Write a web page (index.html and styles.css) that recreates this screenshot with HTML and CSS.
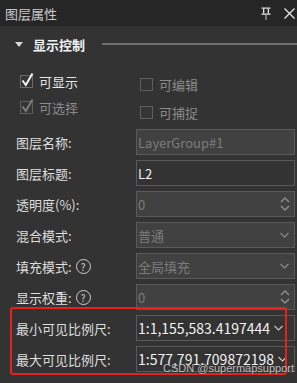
FILE: index.html
```html
<!DOCTYPE html>
<html lang="zh">
<head>
<meta charset="utf-8">
<link rel="stylesheet" href="styles.css">
</head>
<body>
<div class="panel">
  <div class="titlebar">
    <span class="title">图层属性</span>
    <div class="title-icons">
      <svg class="pin" width="10" height="14" viewBox="0 0 10 14">
        <rect x="0.5" y="0.5" width="9" height="1.2" fill="#e6e6e6"/>
        <rect x="2" y="1.5" width="1.3" height="5" fill="#e6e6e6"/>
        <rect x="6.7" y="1.5" width="1.3" height="5" fill="#e6e6e6"/>
        <rect x="0.5" y="6.5" width="9" height="1.3" fill="#e6e6e6"/>
        <rect x="4.2" y="7.5" width="1.6" height="5.5" fill="#8a8a8a"/>
      </svg>
      <svg class="close" width="11" height="11" viewBox="0 0 11 11">
        <path d="M0.5 0.5 L10.5 10.5 M10.5 0.5 L0.5 10.5" stroke="#e6e6e6" stroke-width="1.3" fill="none"/>
      </svg>
    </div>
  </div>

  <div class="section-head">
    <span class="tri"></span>
    <span class="section-title">显示控制</span>
    <span class="section-line"></span>
  </div>

  <div class="checks">
    <div class="check-col left">
      <div class="check-item">
        <span class="box"><svg width="15" height="16" viewBox="0 0 15 16"><path d="M2.5 8.5 L5.8 13 L12.5 1.5" stroke="#f2f2f2" stroke-width="2" fill="none"/></svg></span>
        <span class="check-label">可显示</span>
      </div>
      <div class="check-item dim">
        <span class="box"><svg width="15" height="16" viewBox="0 0 15 16"><path d="M2.5 8.5 L5.8 13 L12.5 1.5" stroke="#7e7e7e" stroke-width="2" fill="none"/></svg></span>
        <span class="check-label">可选择</span>
      </div>
    </div>
    <div class="check-col right">
      <div class="check-item dim">
        <span class="box"></span>
        <span class="check-label">可编辑</span>
      </div>
      <div class="check-item dim">
        <span class="box"></span>
        <span class="check-label">可捕捉</span>
      </div>
    </div>
  </div>

  <div class="form">
    <div class="row">
      <span class="label">图层名称:</span>
      <div class="field disabled"><span class="val">LayerGroup#1</span></div>
    </div>
    <div class="row">
      <span class="label">图层标题:</span>
      <div class="field"><span class="val">L2</span></div>
    </div>
    <div class="row">
      <span class="label">透明度(%):</span>
      <div class="field disabled"><span class="val">0</span>
        <svg class="spin" width="10" height="18" viewBox="0 0 10 18"><path d="M1 7 L5 3 L9 7 M1 11 L5 15 L9 11" stroke="#8c8c8c" stroke-width="1.5" fill="none"/></svg>
      </div>
    </div>
    <div class="row">
      <span class="label">混合模式:</span>
      <div class="field disabled"><span class="val">普通</span>
        <svg class="chev" width="9" height="6" viewBox="0 0 9 6"><path d="M0.5 1 L4.5 5 L8.5 1" stroke="#8c8c8c" stroke-width="1.1" fill="none"/></svg>
      </div>
    </div>
    <div class="row">
      <span class="label">填充模式:<span class="help">?</span></span>
      <div class="field disabled"><span class="val">全局填充</span>
        <svg class="chev" width="9" height="6" viewBox="0 0 9 6"><path d="M0.5 1 L4.5 5 L8.5 1" stroke="#8c8c8c" stroke-width="1.1" fill="none"/></svg>
      </div>
    </div>
    <div class="row">
      <span class="label">显示权重:<span class="help">?</span></span>
      <div class="field disabled"><span class="val">0</span>
        <svg class="spin" width="10" height="18" viewBox="0 0 10 18"><path d="M1 7 L5 3 L9 7 M1 11 L5 15 L9 11" stroke="#8c8c8c" stroke-width="1.5" fill="none"/></svg>
      </div>
    </div>
    <div class="row">
      <span class="label">最小可见比例尺:</span>
      <div class="field scale"><span class="val">1:1,155,583.4197444</span>
        <svg class="chev near" width="9" height="6" viewBox="0 0 9 6"><path d="M0.5 1 L4.5 5 L8.5 1" stroke="#c8c8c8" stroke-width="1.1" fill="none"/></svg>
      </div>
    </div>
    <div class="row">
      <span class="label">最大可见比例尺:</span>
      <div class="field scale"><span class="val">1:577,791.709872198</span>
        <svg class="chev near" width="9" height="6" viewBox="0 0 9 6"><path d="M0.5 1 L4.5 5 L8.5 1" stroke="#c8c8c8" stroke-width="1.1" fill="none"/></svg>
      </div>
    </div>
  </div>

  <div class="highlight"></div>
  <div class="watermark">CSDN @supermapsupport</div>
</div>
</body>
</html>
```

FILE: styles.css
```css
html, body {
  margin: 0;
  padding: 0;
  background: #333333;
}

.panel {
  position: relative;
  width: 297px;
  height: 383px;
  overflow: hidden;
  background: #333333;
  font-family: "Noto Sans CJK SC", "Microsoft YaHei", sans-serif;
  font-size: 13px;
  color: #e2e2e2;
}

.titlebar {
  height: 26px;
  background: #262626;
  display: flex;
  align-items: center;
  justify-content: space-between;
  padding-left: 5px;
  padding-right: 2px;
}

.title {
  color: #c9c9c9;
  font-size: 13px;
}

.title-icons {
  display: flex;
  align-items: center;
  gap: 13px;
}

.pin { margin-top: 1px; }

.section-head {
  height: 36px;
  display: flex;
  align-items: center;
}

.tri {
  width: 0;
  height: 0;
  margin-left: 15px;
  border-left: 4px solid transparent;
  border-right: 4px solid transparent;
  border-top: 5px solid #d8d8d8;
}

.section-title {
  margin-left: 10px;
  font-weight: bold;
  color: #eef2f6;
}

.section-line {
  flex: 1;
  height: 2px;
  margin-left: 17px;
  background: #6e6e6e;
}

.checks {
  display: flex;
  height: 67px;
  padding-top: 6px;
  box-sizing: border-box;
}

.check-col {
  display: flex;
  flex-direction: column;
}

.check-col.left {
  width: 120px;
  padding-left: 20px;
}

.check-col.right {
  padding-top: 2px;
}

.check-item {
  height: 26px;
  display: flex;
  align-items: center;
}

.check-col.right .check-item {
  height: 28px;
}

.box {
  position: relative;
  width: 13px;
  height: 13px;
  box-sizing: border-box;
  border: 1px solid #6a6a6a;
  background: #353535;
}

.box svg {
  position: absolute;
  left: -1px;
  top: -4px;
}

.check-label {
  margin-left: 6px;
  color: #e6e6e6;
}

.check-item.dim .check-label {
  color: #8a8a8a;
}

.check-item.dim .box {
  border-color: #5e5e5e;
}

.form {
  display: flex;
  flex-direction: column;
  gap: 5px;
}

.row {
  display: flex;
  align-items: center;
  height: 26px;
}

.label {
  width: 120px;
  padding-left: 16px;
  display: flex;
  align-items: center;
  color: #dedede;
}

.help {
  width: 13px;
  height: 13px;
  margin-left: 4px;
  border: 1px solid #cfcfcf;
  border-radius: 50%;
  font-size: 10px;
  line-height: 13px;
  text-align: center;
  color: #d8d8d8;
}

.field {
  width: 159px;
  height: 26px;
  box-sizing: border-box;
  border: 1px solid #5a5a5a;
  background: #333333;
  display: flex;
  align-items: center;
  padding-left: 1px;
  padding-right: 5px;
  color: #f2f2f2;
  position: relative;
}

.field .val {
  flex: 1;
  white-space: nowrap;
}

.field.disabled {
  background: #414141;
  color: #7c7c7c;
}

.field.scale {
  font-size: 14px;
  padding-right: 7px;
}

.field.scale .val {
  flex: none;
}

.chev.near {
  margin-left: 4px;
}

.spin {
  margin-right: -1px;
}

.highlight {
  position: absolute;
  left: 10px;
  top: 307px;
  width: 277px;
  height: 68px;
  box-sizing: border-box;
  border: 2px solid #e5221b;
  border-radius: 3px;
  pointer-events: none;
}

.watermark {
  position: absolute;
  right: 3px;
  top: 362px;
  font-family: "Liberation Sans", Arial, sans-serif;
  font-size: 11px;
  color: rgba(235, 235, 235, 0.8);
  text-shadow: 0 0 1px rgba(0, 0, 0, 0.6);
}
```
